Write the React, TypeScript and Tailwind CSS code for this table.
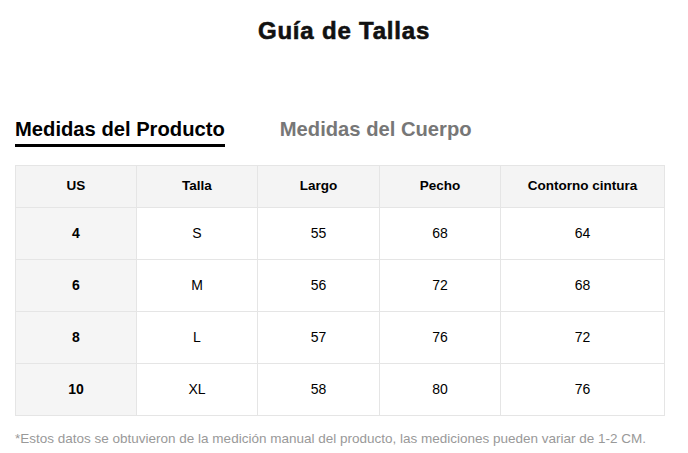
const headers = ["US", "Talla", "Largo", "Pecho", "Contorno cintura"];

const rows = [
  ["4", "S", "55", "68", "64"],
  ["6", "M", "56", "72", "68"],
  ["8", "L", "57", "76", "72"],
  ["10", "XL", "58", "80", "76"],
];

const cols = "grid grid-cols-[121px_121px_122px_121px_1fr]";

export default function App() {
  return (
    <div className="w-[688px] h-[453px] bg-white font-['Liberation_Sans',Arial,sans-serif] text-black">
      <h1 className="pt-[17px] text-center text-[24px] font-bold leading-[28px] tracking-[0.8px] text-[#111] [-webkit-text-stroke:0.6px_#111]">
        Guía de Tallas
      </h1>

      <div className="mt-[72px] flex gap-[55px] px-[15px]">
        <div className="flex flex-col">
          <span className="text-[20.2px] font-bold leading-[24px]">Medidas del Producto</span>
          <span className="mt-[3px] h-[3px] bg-black" />
        </div>
        <span className="text-[20.2px] font-bold leading-[24px] text-[#777]">Medidas del Cuerpo</span>
      </div>

      <div className="mx-[15px] mt-[18px] w-[650px] border-l border-t border-[#e5e5e5] text-[14px]">
        <div className={`${cols} h-[42px] bg-[#f4f4f4] text-[13.5px] font-bold`}>
          {headers.map((h) => (
            <div key={h} className="flex items-center justify-center border-b border-r border-[#e5e5e5]">
              {h}
            </div>
          ))}
        </div>
        {rows.map((r) => (
          <div key={r[0]} className={`${cols} h-[52px]`}>
            {r.map((c, i) => (
              <div
                key={i}
                className={`flex items-center justify-center border-b border-r border-[#e5e5e5] ${
                  i === 0 ? "bg-[#f5f5f5] font-bold" : ""
                }`}
              >
                {c}
              </div>
            ))}
          </div>
        ))}
      </div>

      <p className="mt-[14px] px-[15px] text-[13.5px] leading-[18px] text-[#999]">
        *Estos datos se obtuvieron de la medición manual del producto, las mediciones pueden variar de 1-2 CM.
      </p>
    </div>
  );
}
